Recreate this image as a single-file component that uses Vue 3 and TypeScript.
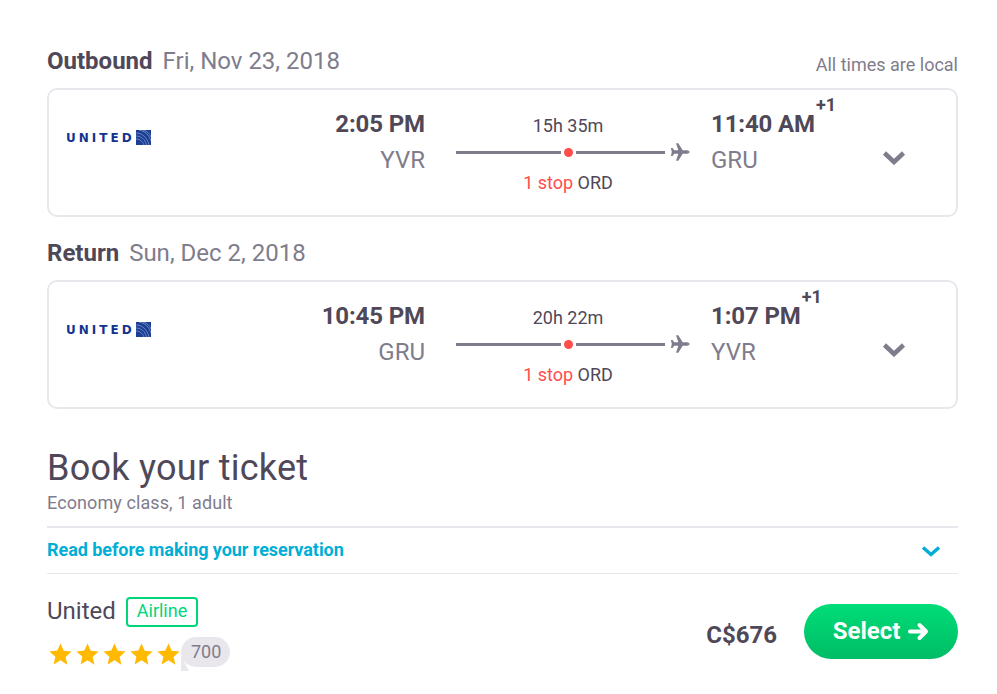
<script setup lang="ts">
interface Leg {
  label: string
  date: string
  depart: string
  from: string
  duration: string
  arrive: string
  to: string
  note?: string
}

const legs: Leg[] = [
  { label: 'Outbound', date: 'Fri, Nov 23, 2018', note: 'All times are local', depart: '2:05 PM', from: 'YVR', duration: '15h 35m', arrive: '11:40 AM', to: 'GRU' },
  { label: 'Return', date: 'Sun, Dec 2, 2018', depart: '10:45 PM', from: 'GRU', duration: '20h 22m', arrive: '1:07 PM', to: 'YVR' },
]
const stars = [0, 1, 2, 3, 4]
</script>

<template>
  <main class="page">
    <section v-for="leg in legs" :key="leg.label" class="leg">
      <header class="leg-head">
        <h2 class="leg-title"><strong>{{ leg.label }}</strong><span>{{ leg.date }}</span></h2>
        <span v-if="leg.note" class="note">{{ leg.note }}</span>
      </header>
      <div class="card">
        <div class="logo">
          <span class="logo-text">UNITED</span>
          <svg width="15" height="15" viewBox="0 0 15 15">
            <rect width="15" height="15" fill="#1c3f94" />
            <g fill="none" stroke="#9db2e0" stroke-width="0.6">
              <path d="M0 3C6 3 11 7 13 15" />
              <path d="M0 6C5 6 9 9 10.500 15" />
              <path d="M0 9C3.500 9 6.500 11 8 15" />
              <path d="M3 0C9 1 13 5 15 11" />
              <path d="M7 0C11 1 14 4 15 7" />
            </g>
          </svg>
        </div>
        <div class="place place-from">
          <div class="time">{{ leg.depart }}</div>
          <div class="code">{{ leg.from }}</div>
        </div>
        <div class="route">
          <div class="duration">{{ leg.duration }}</div>
          <div class="track">
            <span class="bar"></span>
            <span class="dot"></span>
            <span class="bar bar-short"></span>
            <svg class="plane" width="20" height="18" viewBox="0 0 20 18">
              <path fill="#7f7c8c" d="M19.500 9c0-1-1.300-1.700-2.600-1.700h-4.200L8.300.2H6.100l2.200 7.100H4.200L2.600 5.100H.9l.9 3.900-.9 3.900h1.700l1.600-2.200h4.100l-2.200 7.100h2.200l4.400-7.100h4.200c1.300 0 2.600-.7 2.600-1.700z" />
            </svg>
          </div>
          <div class="stops"><span class="stop-count">1 stop</span> ORD</div>
        </div>
        <div class="place place-to">
          <div class="time">{{ leg.arrive }}<sup class="plus">+1</sup></div>
          <div class="code">{{ leg.to }}</div>
        </div>
        <svg class="chevron" width="24" height="15" viewBox="0 0 24 15">
          <path d="M2.500 3 12 12l9.500-9" fill="none" stroke="#7f7c8c" stroke-width="4.500" />
        </svg>
      </div>
    </section>

    <section class="book">
      <h1 class="book-title">Book your ticket</h1>
      <p class="book-sub">Economy class, 1 adult</p>
    </section>

    <div class="notice">
      <span class="notice-text">Read before making your reservation</span>
      <svg width="20" height="12" viewBox="0 0 20 12">
        <path d="M2 2.500 10 9.500l8-7" fill="none" stroke="#00aed6" stroke-width="3.400" />
      </svg>
    </div>

    <div class="offer">
      <div class="seller">
        <div class="seller-name">
          <span class="name">United</span>
          <span class="tag">Airline</span>
        </div>
        <div class="rating">
          <svg v-for="s in stars" :key="s" class="star" width="25" height="24" viewBox="0 0 24 24">
            <path fill="#ffb900" d="M12 1.500l3.200 7.300 7.900.8-6 5.300 1.800 7.800L12 18.300 5.100 22.500l1.800-7.800-6-5.300 7.900-.8z" />
          </svg>
          <span class="bubble">700</span>
        </div>
      </div>
      <div class="buy">
        <span class="price">C$676</span>
        <button class="select" type="button">
          <span class="select-label">Select</span>
          <svg width="21" height="19" viewBox="0 0 21 19">
            <path d="M2 9.500h16M11.500 3 18 9.500 11.500 16" fill="none" stroke="#fff" stroke-width="4" stroke-linecap="round" stroke-linejoin="round" />
          </svg>
        </button>
      </div>
    </div>
  </main>
</template>

<style scoped>
.page {
  box-sizing: border-box;
  width: 997px;
  height: 694px;
  padding: 54px 39px 0 47px;
  overflow: hidden;
  background: #fff;
  color: #4f4858;
  font-family: Roboto, "Liberation Sans", sans-serif;
}
.leg + .leg {
  margin-top: 21px;
}
.leg-head {
  display: flex;
  justify-content: space-between;
  align-items: flex-end;
  height: 34px;
  padding-bottom: 11px;
  box-sizing: border-box;
}
.leg + .leg .leg-head {
  height: 42px;
  padding-bottom: 11px;
}
.leg-title {
  margin: 0;
  display: flex;
  gap: 10px;
  font-size: 24px;
  line-height: 32px;
  font-weight: 400;
  color: #7f7c8c;
}
.leg-title strong {
  color: #4f4858;
  font-weight: 700;
}
.note {
  font-size: 18px;
  line-height: 24px;
  color: #7f7c8c;
}
.card {
  box-sizing: border-box;
  height: 129px;
  border: 2px solid #e8e7ec;
  border-radius: 10px;
  display: grid;
  grid-template-columns: 224px 135px 265px 192px 24px;
  padding: 0 0 0 17px;
  position: relative;
}
.logo {
  display: flex;
  align-items: center;
  gap: 1px;
  height: 15px;
  margin-top: 40px;
}
.logo-text {
  font-family: "DejaVu Sans", sans-serif;
  font-weight: 700;
  font-size: 12px;
  letter-spacing: 3px;
  color: #13338f;
}
.place {
  padding-top: 18px;
}
.place-from {
  text-align: right;
}
.time {
  font-size: 24px;
  line-height: 32px;
  font-weight: 700;
  letter-spacing: -0.12px;
  color: #4f4858;
  white-space: nowrap;
}
.code {
  margin-top: 4px;
  font-size: 24px;
  line-height: 32px;
  color: #7f7c8c;
}
.plus {
  position: absolute;
  margin-top: -12px;
  margin-left: 1px;
  font-size: 18px;
  line-height: 18px;
  font-weight: 700;
  vertical-align: baseline;
}
.route {
  padding: 24px 0 0 31px;
}
.duration {
  width: 224px;
  text-align: center;
  font-size: 18px;
  line-height: 24px;
}
.track {
  display: flex;
  align-items: center;
  height: 18px;
  margin-top: 5px;
}
.bar {
  width: 105px;
  height: 3px;
  background: #7f7c8c;
}
.bar-short {
  width: 89px;
}
.dot {
  width: 9px;
  height: 9px;
  border-radius: 50%;
  margin: 0 3px;
  background: #ff4d4d;
}
.plane {
  margin-left: 5px;
}
.stops {
  width: 224px;
  margin-top: 10px;
  text-align: center;
  font-size: 18px;
  line-height: 24px;
}
.stop-count {
  color: #ff4d4d;
}
.place-to {
  padding-left: 21px;
}
.chevron {
  align-self: start;
  margin-top: 60px;
}
.book {
  margin-top: 37px;
}
.book-title {
  margin: 0;
  font-size: 36px;
  line-height: 44px;
  font-weight: 400;
  letter-spacing: 0.27px;
}
.book-sub {
  margin: 1px 0 0;
  font-size: 18px;
  line-height: 24px;
  letter-spacing: 0.09px;
  color: #7f7c8c;
}
.notice {
  box-sizing: border-box;
  margin-top: 11px;
  height: 48px;
  display: flex;
  justify-content: space-between;
  align-items: center;
  padding-right: 17px;
  border-top: 2px solid #e8e7ec;
  border-bottom: 1px solid #e8e7ec;
  color: #00aed6;
  font-size: 18px;
  font-weight: 700;
  letter-spacing: -0.06px;
}
.notice-text {
  margin-top: -2px;
}
.offer {
  display: flex;
  justify-content: space-between;
  padding-top: 21px;
}
.seller-name {
  display: flex;
  align-items: center;
  gap: 10px;
}
.name {
  font-size: 24px;
  line-height: 32px;
}
.tag {
  box-sizing: border-box;
  height: 30px;
  margin-top: 2px;
  padding: 0 9px;
  border: 2px solid #00d67a;
  border-radius: 4px;
  color: #00d67a;
  font-size: 18px;
  line-height: 24px;
}
.rating {
  display: flex;
  align-items: center;
  margin-top: 7px;
  height: 36px;
  padding-left: 1px;
}
.star {
  margin-right: 2px;
  margin-top: 4px;
}
.bubble {
  position: relative;
  box-sizing: border-box;
  height: 30px;
  width: 49px;
  margin-left: -2px;
  margin-top: 0;
  padding-left: 10px;
  border-radius: 15px;
  background: #e9e7ec;
  color: #7f7c8c;
  font-size: 18px;
  line-height: 30px;
}
.bubble::after {
  content: "";
  position: absolute;
  left: 0;
  top: 18px;
  border-left: 8px solid #e9e7ec;
  border-top: 16px solid transparent;
}
.buy {
  display: flex;
  align-items: center;
  gap: 27px;
  height: 55px;
  margin-top: 9px;
}
.price {
  font-size: 24px;
  font-weight: 700;
  margin-top: 6px;
}
.select {
  display: flex;
  align-items: center;
  justify-content: center;
  gap: 8px;
  width: 154px;
  height: 55px;
  padding: 0;
  border: 0;
  border-radius: 28px;
  background: linear-gradient(180deg, #00dc78, #00bd65);
  color: #fff;
  font-family: Roboto, "Liberation Sans", sans-serif;
  font-size: 24px;
  font-weight: 700;
}
.select-label {
  margin-top: -2px;
}
</style>

<style>
html,
body {
  margin: 0;
  background: #fff;
}
</style>
